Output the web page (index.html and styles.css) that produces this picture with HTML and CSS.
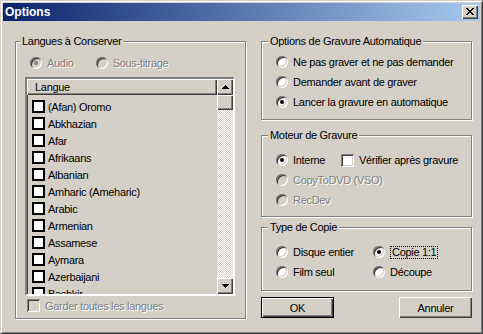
FILE: index.html
```html
<!DOCTYPE html>
<html lang="fr">
<head>
    <meta charset="UTF-8">
    <title>Options</title>
    <link rel="stylesheet" href="styles.css">
</head>
<body>
    <div class="window">
        <div class="titlebar">
            <span class="title">Options</span>
            <div class="close-btn">
                <svg width="8" height="7" viewBox="0 0 8 7" shape-rendering="crispEdges"><path d="M0 0h2v1h-2z M6 0h2v1h-2z M1 1h2v1h-2z M5 1h2v1h-2z M2 2h4v1h-4z M3 3h2v1h-2z M2 4h4v1h-4z M1 5h2v1h-2z M5 5h2v1h-2z M0 6h2v1h-2z M6 6h2v1h-2z" fill="#000"/></svg>
            </div>
        </div>

        <div class="dialog">
            <div class="group group-langs">
                <div class="group-label">Langues à Conserver</div>
                <div class="mode-row">
                    <label class="opt disabled"><span class="radio checked"></span>Audio</label>
                    <label class="opt disabled"><span class="radio"></span>Sous-titrage</label>
                </div>
                <div class="list">
                    <div class="list-main">
                        <div class="list-header">Langue</div>
                        <div class="list-rows">
                            <div class="list-row"><span class="check flat"></span>(Afan) Oromo</div>
                            <div class="list-row"><span class="check flat"></span>Abkhazian</div>
                            <div class="list-row"><span class="check flat"></span>Afar</div>
                            <div class="list-row"><span class="check flat"></span>Afrikaans</div>
                            <div class="list-row"><span class="check flat"></span>Albanian</div>
                            <div class="list-row"><span class="check flat"></span>Amharic (Ameharic)</div>
                            <div class="list-row"><span class="check flat"></span>Arabic</div>
                            <div class="list-row"><span class="check flat"></span>Armenian</div>
                            <div class="list-row"><span class="check flat"></span>Assamese</div>
                            <div class="list-row"><span class="check flat"></span>Aymara</div>
                            <div class="list-row"><span class="check flat"></span>Azerbaijani</div>
                            <div class="list-row"><span class="check flat"></span>Bashkir</div>
                        </div>
                    </div>
                    <div class="scrollbar">
                        <div class="sb-btn">
                            <svg width="7" height="4" viewBox="0 0 7 4" shape-rendering="crispEdges"><path d="M3 0h1v1h-1z M2 1h3v1h-3z M1 2h5v1h-5z M0 3h7v1h-7z" fill="#000"/></svg>
                        </div>
                        <div class="sb-thumb"></div>
                        <div class="sb-track"></div>
                        <div class="sb-btn">
                            <svg width="7" height="4" viewBox="0 0 7 4" shape-rendering="crispEdges"><path d="M0 0h7v1h-7z M1 1h5v1h-5z M2 2h3v1h-3z M3 3h1v1h-1z" fill="#000"/></svg>
                        </div>
                    </div>
                </div>
                <label class="opt disabled keep-all"><span class="check"></span>Garder toutes les langues</label>
            </div>

            <div class="right-col">
                <div class="group group-auto">
                    <div class="group-label">Options de Gravure Automatique</div>
                    <div class="row"><label class="opt"><span class="radio"></span>Ne pas graver et ne pas demander</label></div>
                    <div class="row"><label class="opt"><span class="radio"></span>Demander avant de graver</label></div>
                    <div class="row"><label class="opt"><span class="radio checked"></span>Lancer la gravure en automatique</label></div>
                </div>

                <div class="group group-engine">
                    <div class="group-label">Moteur de Gravure</div>
                    <div class="row">
                        <label class="opt col-engine"><span class="radio checked"></span>Interne</label>
                        <label class="opt"><span class="check"></span>Vérifier après gravure</label>
                    </div>
                    <div class="row"><label class="opt disabled"><span class="radio"></span>CopyToDVD (VSO)</label></div>
                    <div class="row"><label class="opt disabled"><span class="radio"></span>RecDev</label></div>
                </div>

                <div class="group group-copy">
                    <div class="group-label">Type de Copie</div>
                    <div class="row">
                        <label class="opt col-copy"><span class="radio"></span>Disque entier</label>
                        <label class="opt"><span class="radio checked"></span><span class="focus">Copie 1:1</span></label>
                    </div>
                    <div class="row">
                        <label class="opt col-copy"><span class="radio"></span>Film seul</label>
                        <label class="opt"><span class="radio"></span>Découpe</label>
                    </div>
                </div>

                <div class="buttons">
                    <button class="btn default">OK</button>
                    <button class="btn">Annuler</button>
                </div>
            </div>
        </div>
    </div>
</body>
</html>
```

FILE: styles.css
```css
* {
    box-sizing: border-box;
}
body {
    margin: 0;
    background-color: #d4d0c8;
    font-family: "Liberation Sans", Arial, sans-serif;
    font-size: 11px;
    letter-spacing: -0.3px;
    color: #000;
}
.window {
    width: 483px;
    height: 334px;
    padding: 2px;
    border: 1px solid;
    border-color: #d4d0c8 #404040 #404040 #d4d0c8;
    box-shadow: inset 1px 1px 0 #fff, inset -1px -1px 0 #808080;
    background-color: #d4d0c8;
}
.titlebar {
    height: 18px;
    display: flex;
    align-items: center;
    justify-content: space-between;
    padding: 0 2px;
    background: linear-gradient(to right, #0a246a, #a6caf0);
}
.title {
    color: #fff;
    font-weight: bold;
    font-size: 12px;
    letter-spacing: 0;
}
.close-btn {
    width: 16px;
    height: 14px;
    display: flex;
    align-items: center;
    justify-content: center;
    padding: 0 1px 1px 0;
    background-color: #d4d0c8;
    box-shadow: inset 1px 1px 0 #fff, inset -1px -1px 0 #404040, inset -2px -2px 0 #808080;
}
.close-btn svg,
.sb-btn svg {
    display: block;
}

.dialog {
    display: flex;
    gap: 15px;
    padding: 20px 8px 0 12px;
}

/* group boxes */
.group {
    position: relative;
    border: 1px solid #808080;
    box-shadow: 1px 1px 0 #fff, inset 1px 1px 0 #fff;
}
.group-label {
    position: absolute;
    top: -7px;
    left: 6px;
    padding: 0 2px;
    line-height: 13px;
    background-color: #d4d0c8;
}
.group-langs {
    width: 231px;
    height: 278px;
    padding: 14px 10px 6px 9px;
}
.group-langs .group-label {
    left: 4px;
}
.right-col {
    width: 211px;
    display: flex;
    flex-direction: column;
}
.group-auto {
    height: 79px;
    padding: 10px 0 0 14px;
}
.group-engine {
    height: 82px;
    margin-top: 15px;
    padding: 14px 0 0 14px;
}
.group-copy {
    height: 64px;
    margin-top: 10px;
    padding: 14px 0 0 14px;
}
.row {
    height: 20px;
    display: flex;
    align-items: center;
}
.col-engine {
    width: 65px;
}
.col-copy {
    width: 97px;
}

/* radios and checkboxes */
.opt {
    display: inline-flex;
    align-items: center;
    gap: 5px;
    white-space: nowrap;
}
.opt.disabled {
    color: #808080;
    text-shadow: 1px 1px 0 #fff;
}
.radio {
    position: relative;
    flex: none;
    width: 12px;
    height: 12px;
    border-radius: 50%;
    background-color: #fff;
    box-shadow: inset 1px 1px 0 #808080, inset -1px -1px 0 #fff, inset 2px 2px 0 #404040, inset -2px -2px 0 #d4d0c8;
}
.radio.checked::after {
    content: "";
    position: absolute;
    left: 4px;
    top: 4px;
    width: 4px;
    height: 4px;
    border-radius: 50%;
    background-color: #000;
}
.disabled .radio {
    background-color: #d4d0c8;
}
.disabled .radio.checked::after {
    background-color: #808080;
}
.check {
    flex: none;
    width: 13px;
    height: 13px;
    background-color: #fff;
    box-shadow: inset 1px 1px 0 #808080, inset -1px -1px 0 #fff, inset 2px 2px 0 #404040, inset -2px -2px 0 #d4d0c8;
}
.disabled .check {
    background-color: #d4d0c8;
}
.check.flat {
    border: 2px solid #000;
    box-shadow: none;
}
.focus {
    border: 1px dotted #000;
    padding: 0 1px;
    line-height: 11px;
}

.mode-row {
    height: 13px;
    display: flex;
    align-items: center;
    gap: 22px;
    padding-left: 5px;
}
.keep-all {
    height: 13px;
    margin: 3px 0 0 2px;
}

/* language list */
.list {
    display: flex;
    height: 219px;
    margin-top: 8px;
    border: 2px solid;
    border-color: #808080 #fff #fff #808080;
    box-shadow: inset 1px 1px 0 #404040;
    padding: 0;
}
.list-main {
    flex: 1;
    overflow: hidden;
}
.list-header {
    height: 16px;
    line-height: 16px;
    padding-left: 8px;
    box-shadow: inset 1px 1px 0 #fff, inset -1px -1px 0 #404040, inset -2px -2px 0 #808080;
}
.list-rows {
    padding: 3px 0 0 5px;
}
.list-row {
    height: 17px;
    display: flex;
    align-items: center;
    gap: 3px;
    white-space: nowrap;
}
.scrollbar {
    width: 16px;
    display: flex;
    flex-direction: column;
}
.sb-btn,
.sb-thumb {
    height: 16px;
    background-color: #d4d0c8;
    box-shadow: inset 1px 1px 0 #fff, inset -1px -1px 0 #404040, inset -2px -2px 0 #808080;
}
.sb-btn {
    display: flex;
    align-items: center;
    justify-content: center;
}
.sb-thumb {
    height: 15px;
}
.sb-track {
    flex: 1;
    background: repeating-conic-gradient(#fff 0 25%, #d4d0c8 0 50%) 0 0 / 2px 2px;
}

/* buttons */
.buttons {
    display: flex;
    justify-content: space-between;
    margin-top: 6px;
}
.btn {
    width: 73px;
    height: 21px;
    padding: 0;
    border: none;
    font-family: inherit;
    font-size: 11px;
    letter-spacing: -0.3px;
    color: #000;
    background-color: #d4d0c8;
    box-shadow: inset 1px 1px 0 #fff, inset -1px -1px 0 #404040, inset -2px -2px 0 #808080;
}
.btn.default {
    border: 1px solid #000;
}
```
